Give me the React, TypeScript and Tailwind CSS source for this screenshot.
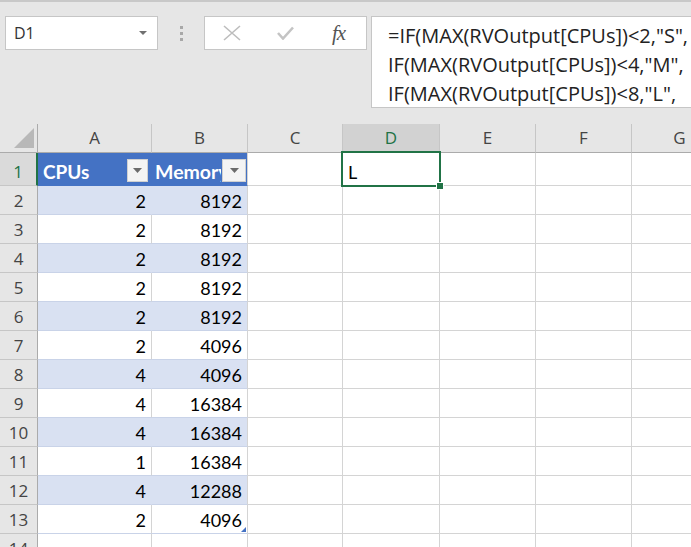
import React from 'react'

const COLS = ['A', 'B', 'C', 'D', 'E', 'F', 'G']
// widths include the right grid line
const WIDTHS = ['w-[114px]', 'w-[96px]', 'w-[95px]', 'w-[97px]', 'w-[96px]', 'w-[96px]', 'w-[96px]']

const DATA: [number, number][] = [
  [2, 8192],
  [2, 8192],
  [2, 8192],
  [2, 8192],
  [2, 8192],
  [2, 4096],
  [4, 4096],
  [4, 16384],
  [4, 16384],
  [1, 16384],
  [4, 12288],
  [2, 4096],
]

const uiFont = { fontFamily: '"Open Sans", "Noto Sans", sans-serif' }
const cellFont = { fontFamily: 'Lato, "Open Sans", sans-serif' }

function FilterButton({ w = 'w-[21px]' }: { w?: string }) {
  return (
    <div className={`${w} h-[23px] bg-[#f4f4f4] border border-[#d0d0d0] flex items-center justify-center shrink-0`}>
      <svg width="9" height="5" viewBox="0 0 9 5">
        <path d="M0 0 L9 0 L4.5 5 Z" fill="#6b6b6b" />
      </svg>
    </div>
  )
}

function TopBar() {
  return (
    <div className="h-[124px] w-[720px] bg-[#e6e6e6] border-t-2 border-[#c8c8c8] flex items-start pt-[14px]" style={uiFont}>
      {/* Name box */}
      <div className="ml-[5px] w-[153px] shrink-0 h-[34px] bg-white border border-[#c6c6c6] flex items-center justify-between pl-[8px] pr-[10px]">
        <span className="text-[16px] text-[#333]">D1</span>
        <svg width="8" height="4" viewBox="0 0 8 4">
          <path d="M0 0 L8 0 L4 4 Z" fill="#707070" />
        </svg>
      </div>

      {/* Separator dots */}
      <div className="w-[46px] shrink-0 h-[34px] flex flex-col items-center justify-center gap-[3px]">
        <div className="w-[3px] h-[3px] bg-[#a8a8a8]" />
        <div className="w-[3px] h-[3px] bg-[#a8a8a8]" />
        <div className="w-[3px] h-[3px] bg-[#a8a8a8]" />
      </div>

      {/* Cancel / enter / fx */}
      <div className="w-[163px] shrink-0 h-[34px] bg-white border border-[#c6c6c6] flex items-center">
        <div className="w-[54px] flex justify-center">
          <svg width="18" height="16" viewBox="0 0 18 16">
            <path d="M1 1 L17 15 M17 1 L1 15" stroke="#bdbdbd" strokeWidth="1.6" />
          </svg>
        </div>
        <div className="w-[52px] flex justify-center">
          <svg width="17" height="14" viewBox="0 0 17 14">
            <path d="M1 7 L6 12.5 L16 1.5" stroke="#c4c4c4" strokeWidth="2.6" fill="none" />
          </svg>
        </div>
        <div className="w-[55px] flex justify-center">
          <span
            className="text-[21px] italic text-[#555] leading-none tracking-[-1px]"
            style={{ fontFamily: '"Liberation Serif", "DejaVu Serif", serif' }}
          >
            fx
          </span>
        </div>
      </div>

      {/* Formula box */}
      <div className="ml-[4px] w-[340px] shrink-0 h-[92px] bg-white border border-[#c6c6c6] pl-[16px] pt-[4px] overflow-hidden">
        <div className="text-[20px] leading-[29px] text-[#222] whitespace-nowrap">
          <div>=IF(MAX(RVOutput[CPUs])&lt;2,"S",</div>
          <div>IF(MAX(RVOutput[CPUs])&lt;4,"M",</div>
          <div>IF(MAX(RVOutput[CPUs])&lt;8,"L",</div>
        </div>
      </div>
    </div>
  )
}

function HeaderRow() {
  return (
    <div className="flex h-[29px]" style={uiFont}>
      <div className="w-[38px] shrink-0 bg-[#e6e6e6] border-r border-b border-[#ababab] flex items-end justify-end pr-[3px] pb-[4px]">
        <svg width="20" height="20" viewBox="0 0 20 20">
          <path d="M20 0 L20 20 L0 20 Z" fill="#b8b8b8" />
        </svg>
      </div>
      {COLS.map((c, i) => {
        const sel = c === 'D'
        return (
          <div
            key={c}
            className={`${WIDTHS[i]} shrink-0 border-r border-b flex items-center justify-center text-[17px] ${
              sel ? 'bg-[#d2d2d2] text-[#217346] border-r-[#c6c6c6] border-b-[#217346]' : 'bg-[#e6e6e6] text-[#444] border-r-[#c6c6c6] border-b-[#ababab]'
            }`}
          >
            {c}
          </div>
        )
      })}
    </div>
  )
}

function RowHeader({ n, h, sel }: { n: number; h: string; sel?: boolean }) {
  return (
    <div
      className={`w-[38px] shrink-0 ${h} flex items-end justify-center leading-[26px] text-[17px] border-b ${
        sel
          ? 'bg-[#dadada] text-[#217346] border-r-2 border-r-[#217346] border-b-[#c6c6c6]'
          : 'bg-[#e6e6e6] text-[#444] border-r border-r-[#ababab] border-b-[#c6c6c6]'
      }`}
      style={uiFont}
    >
      {n}
    </div>
  )
}

function EmptyCells({ h, from = 2 }: { h: string; from?: number }) {
  return (
    <>
      {COLS.slice(from).map((c, i) => (
        <div key={c} className={`${WIDTHS[i + from]} ${h} shrink-0 border-r border-b border-[#d4d4d4]`} />
      ))}
    </>
  )
}

export default function App() {
  return (
    <div className="w-[691px] h-[547px] overflow-hidden bg-white relative">
      <TopBar />

      <div className="w-[728px]">
        <HeaderRow />

        {/* Row 1: table header */}
        <div className="flex">
          <RowHeader n={1} h="h-[33px]" sel />
          <div className="w-[114px] h-[33px] shrink-0 bg-[#4472c4] border-b border-[#4472c4] flex items-center pl-[5px] pr-[4px] pt-[3px]">
            <span className="flex-1 mt-[3px] text-white font-bold text-[19px]" style={cellFont}>
              CPUs
            </span>
            <FilterButton />
          </div>
          <div className="w-[96px] h-[33px] shrink-0 bg-[#4472c4] border-r border-b border-r-[#d4d4d4] border-b-[#4472c4] flex items-center pl-[3px] pr-[1px] pt-[3px] overflow-hidden">
            <span className="flex-1 min-w-0 mt-[3px] mr-[1px] overflow-hidden whitespace-nowrap text-white font-bold text-[19.5px]" style={cellFont}>
              Memory
            </span>
            <FilterButton w="w-[24px]" />
          </div>
          <div className="w-[95px] h-[33px] shrink-0 border-r border-b border-[#d4d4d4]" />
          <div className="w-[97px] h-[33px] shrink-0 border-r border-b border-[#d4d4d4] flex items-end pl-[5px] leading-[26px] text-[18px] text-black" style={cellFont}>
            L
          </div>
          {COLS.slice(4).map((c, i) => (
            <div key={c} className={`${WIDTHS[i + 4]} h-[33px] shrink-0 border-r border-b border-[#d4d4d4]`} />
          ))}
        </div>

        {/* Data rows */}
        {DATA.map(([cpu, mem], i) => {
          const blue = i % 2 === 0
          return (
            <div key={i} className="flex">
              <RowHeader n={i + 2} h="h-[29px]" />
              <div
                className={`w-[114px] h-[29px] shrink-0 border-r border-b flex items-end justify-end pr-[5px] leading-[26px] text-[18px] text-black ${
                  blue ? 'bg-[#d9e1f2] border-r-[#d9e1f2] border-b-[#c9d3e8]' : 'bg-white border-r-[#d4d4d4] border-b-[#c9d3e8]'
                }`}
                style={cellFont}
              >
                {cpu}
              </div>
              <div
                className={`w-[96px] h-[29px] shrink-0 border-r border-b border-r-[#d4d4d4] flex items-end justify-end pr-[5px] leading-[26px] text-[18px] text-black relative ${
                  blue ? 'bg-[#d9e1f2] border-b-[#c9d3e8]' : 'bg-white border-b-[#c9d3e8]'
                }`}
                style={cellFont}
              >
                {mem}
                {i === DATA.length - 1 && (
                  <svg className="absolute right-[1px] bottom-[1px]" width="5" height="5" viewBox="0 0 5 5">
                    <path d="M5 0 L5 5 L0 5 Z" fill="#4472c4" />
                  </svg>
                )}
              </div>
              <EmptyCells h="h-[29px]" />
            </div>
          )
        })}

        {/* Row 14 */}
        <div className="flex">
          <RowHeader n={14} h="h-[29px]" />
          <div className="w-[114px] h-[29px] shrink-0 border-r border-b border-[#d4d4d4]" />
          <div className="w-[96px] h-[29px] shrink-0 border-r border-b border-[#d4d4d4]" />
          <EmptyCells h="h-[29px]" />
        </div>
      </div>

      {/* Active cell selection */}
      <div className="absolute left-[341px] top-[151px] w-[100px] h-[36px] border-2 border-[#217346] pointer-events-none" />
      <div className="absolute left-[436px] top-[182px] w-[6px] h-[6px] bg-[#217346] border border-white box-content" />
    </div>
  )
}
